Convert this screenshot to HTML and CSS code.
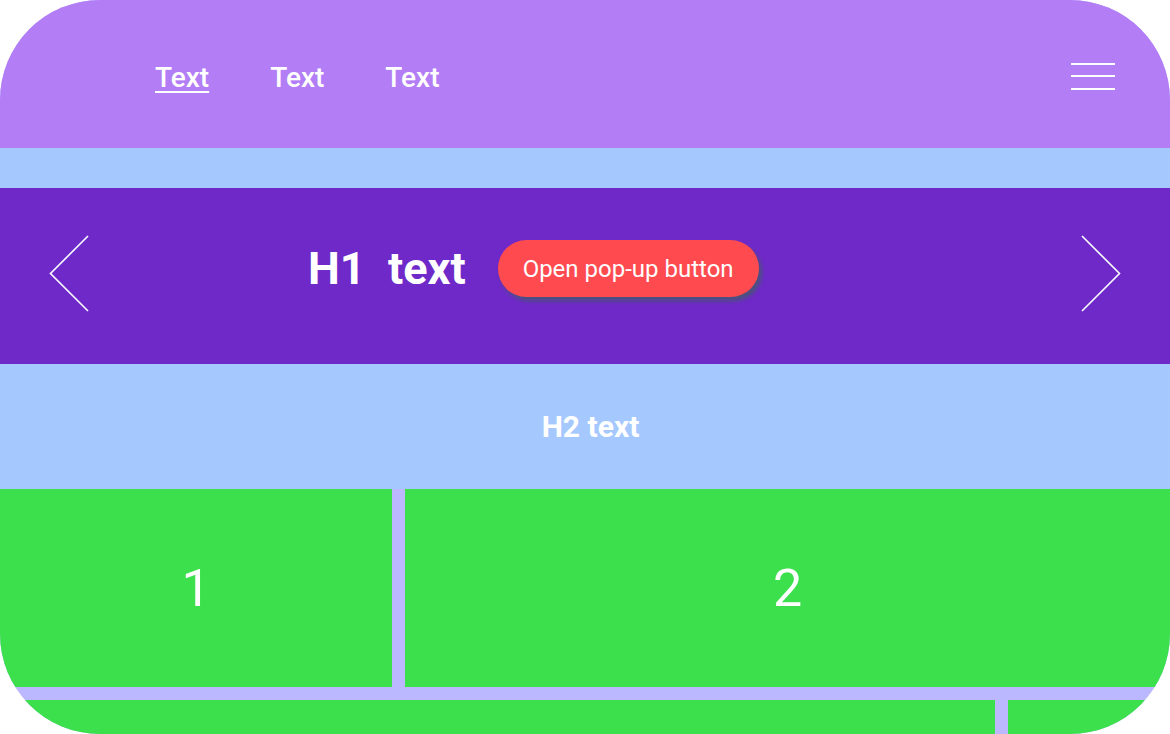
FILE: index.html
```html
<!DOCTYPE html>
<html>
<head>
<meta charset="utf-8">
<link rel="stylesheet" href="styles.css">
</head>
<body>
<div class="frame">
  <header class="topbar">
    <nav class="nav">
      <a class="nav-link active">Text</a>
      <a class="nav-link">Text</a>
      <a class="nav-link">Text</a>
    </nav>
    <div class="burger"><span></span><span></span><span></span></div>
  </header>
  <div class="strip"></div>
  <section class="hero">
    <svg class="arrow" width="40" height="78" viewBox="0 0 40 78"><path d="M39 1 L1.5 38.5 L39 76" fill="none" stroke="#fff" stroke-width="1.6"/></svg>
    <div class="hero-mid">
      <h1 class="h1">H1  text</h1>
      <button class="popup-btn">Open pop-up button</button>
    </div>
    <svg class="arrow" width="40" height="78" viewBox="0 0 40 78"><path d="M1 1 L38.5 38.5 L1 76" fill="none" stroke="#fff" stroke-width="1.6"/></svg>
  </section>
  <section class="sub">
    <h2 class="h2">H2 text</h2>
  </section>
  <div class="grid">
    <div class="cell">1</div>
    <div class="cell">2</div>
  </div>
  <div class="grid grid2">
    <div class="cell"></div>
    <div class="cell"></div>
  </div>
</div>
</body>
</html>
```
FILE: styles.css
```css
html, body {
  margin: 0;
  padding: 0;
  background: #ffffff;
}
body {
  font-family: Roboto, "Liberation Sans", sans-serif;
}
.frame {
  width: 1170px;
  height: 734px;
  border-radius: 100px;
  overflow: hidden;
  background: #bcb8ff;
  display: flex;
  flex-direction: column;
}
.topbar {
  height: 148px;
  flex: none;
  background: #b37ef5;
  display: flex;
  align-items: center;
  justify-content: space-between;
  padding: 0 55px 0 155px;
  box-sizing: border-box;
}
.nav {
  display: flex;
  gap: 61px;
  margin-top: 6px;
}
.nav-link {
  color: #fff;
  font-size: 28px;
  font-weight: 500;
  text-decoration: none;
}
.nav-link.active {
  text-decoration: underline;
  text-decoration-thickness: 2px;
  text-underline-offset: 4px;
}
.burger {
  width: 44px;
  display: flex;
  flex-direction: column;
  gap: 10.5px;
  margin-top: 4px;
}
.burger span {
  display: block;
  height: 2px;
  background: #fff;
}
.strip {
  height: 40px;
  flex: none;
  background: #a5c8ff;
}
.hero {
  height: 176px;
  flex: none;
  background: #6f29c9;
  display: flex;
  align-items: center;
  padding: 0 49px;
  box-sizing: border-box;
}
.arrow {
  display: block;
  margin-top: -4px;
}
.hero-mid {
  flex: 1;
  display: flex;
  align-items: center;
  gap: 32px;
  padding-left: 219px;
  margin-top: -15px;
}
.h1 {
  margin: 0;
  color: #fff;
  font-size: 45px;
  font-weight: 700;
  white-space: pre;
  line-height: 1;
}
.popup-btn {
  height: 57px;
  padding: 0 25px;
  border: none;
  border-radius: 29px;
  background: #ff4a4f;
  color: #fff;
  font-family: Roboto, "Liberation Sans", sans-serif;
  font-size: 24px;
  font-weight: 400;
  box-shadow: 3px 4px 4px rgba(60, 100, 90, 0.7);
}
.sub {
  height: 125px;
  flex: none;
  background: #a5c8ff;
  display: flex;
  align-items: center;
  justify-content: center;
}
.h2 {
  margin: 0 0 0 11px;
  color: #fff;
  font-size: 30px;
  font-weight: 700;
}
.grid {
  display: grid;
  grid-template-columns: 392px 1fr;
  gap: 13px;
  height: 198px;
  flex: none;
}
.grid2 {
  grid-template-columns: 995px 1fr;
  margin-top: 13px;
  height: 60px;
}
.cell {
  background: #3ce04c;
  color: #fff;
  font-size: 52px;
  font-weight: 400;
  display: flex;
  align-items: center;
  justify-content: center;
}
```
